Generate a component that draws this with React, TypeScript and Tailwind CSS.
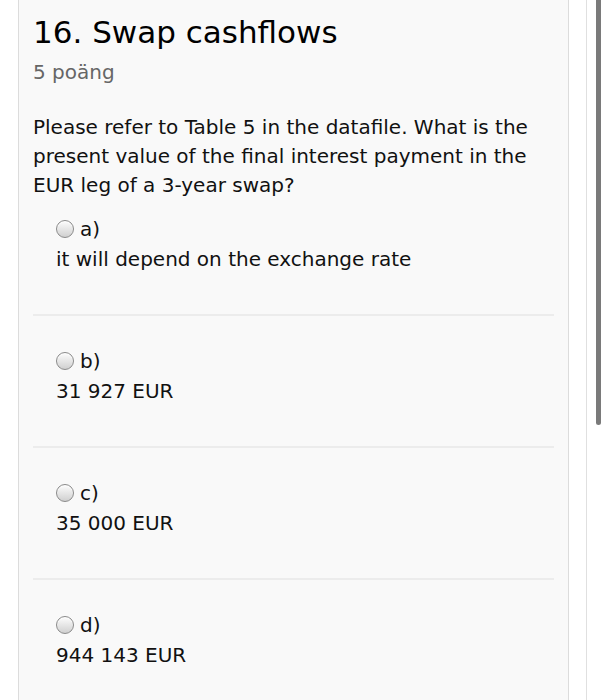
import React from "react";

const options = [
  { key: "a)", text: "it will depend on the exchange rate" },
  { key: "b)", text: "31 927 EUR" },
  { key: "c)", text: "35 000 EUR" },
  { key: "d)", text: "944 143 EUR" },
];

const Radio = () => (
  <span className="inline-block w-[18px] h-[18px] rounded-full border border-[#8a8a8a] bg-gradient-to-b from-[#fdfdfd] to-[#d0d0d0] shadow-[inset_0_1px_1px_rgba(255,255,255,0.9)]" />
);

export default function App() {
  return (
    <div className="relative h-[700px] w-[605px] overflow-hidden bg-white font-['DejaVu_Sans',sans-serif] text-[#111]">
      <div className="flex h-full">
        <div className="ml-[18px] w-[551px] border-x border-[#dcdcdc] bg-[#f9f9f9] px-[14px]">
          <h1 className="mt-[12px] text-[31px] leading-[40px] text-black">16. Swap cashflows</h1>
          <div className="mt-[8px] text-[20px] leading-[24px] text-[#666]">5 poäng</div>
          <p className="mt-[29px] text-[20px] leading-[29px]">
            Please refer to Table 5 in the datafile. What is the present value of the final interest payment in the EUR leg of a 3-year swap?
          </p>
          <div className="mt-[14px]">
            {options.map((o, i) => (
              <div key={o.key} className={i > 0 ? "border-t-2 border-[#ececec]" : ""}>
                <div className={`pl-[23px] ${i > 0 ? "pt-[30px]" : ""} pb-[40px]`}>
                  <label className="flex items-center gap-[6px] text-[20px] leading-[30px]">
                    <Radio />
                    <span>{o.key}</span>
                  </label>
                  <div className="text-[20px] leading-[30px]">{o.text}</div>
                </div>
              </div>
            ))}
          </div>
        </div>
        <div className="ml-[17px] w-px bg-[#e0e0e0]" />
        <div className="ml-[9px] mt-0 h-[425px] w-[5px] rounded-b bg-[#7a7a7a]" />
      </div>
    </div>
  );
}
